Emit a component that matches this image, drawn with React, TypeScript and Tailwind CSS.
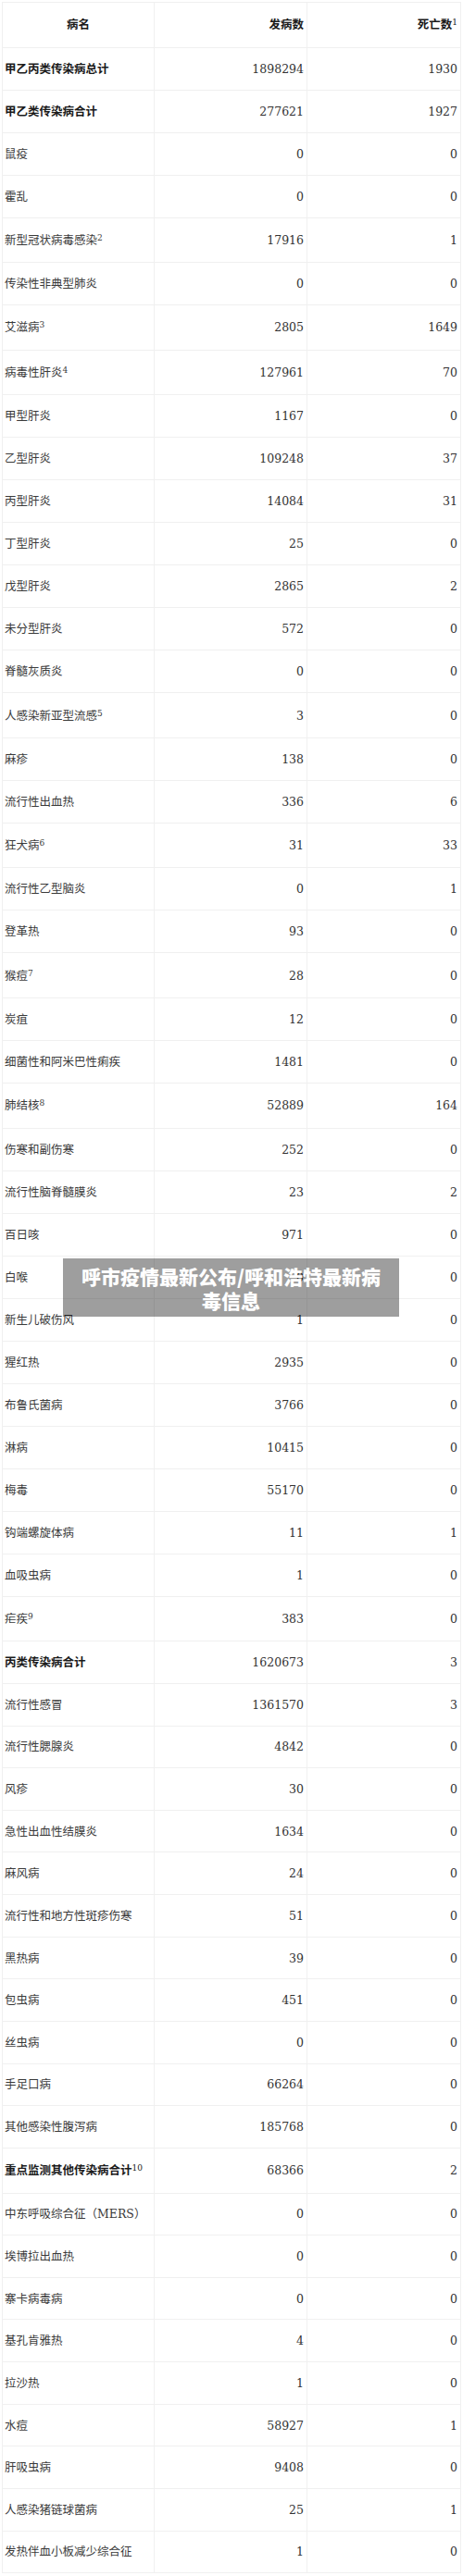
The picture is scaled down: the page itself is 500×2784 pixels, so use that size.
type Row = {
  name: string;
  sup?: string;
  cases: string;
  deaths: string;
  bold?: boolean;
};

const rows: Row[] = [
  { name: "甲乙丙类传染病总计", cases: "1898294", deaths: "1930", bold: true },
  { name: "甲乙类传染病合计", cases: "277621", deaths: "1927", bold: true },
  { name: "鼠疫", cases: "0", deaths: "0" },
  { name: "霍乱", cases: "0", deaths: "0" },
  { name: "新型冠状病毒感染", sup: "2", cases: "17916", deaths: "1" },
  { name: "传染性非典型肺炎", cases: "0", deaths: "0" },
  { name: "艾滋病", sup: "3", cases: "2805", deaths: "1649" },
  { name: "病毒性肝炎", sup: "4", cases: "127961", deaths: "70" },
  { name: "甲型肝炎", cases: "1167", deaths: "0" },
  { name: "乙型肝炎", cases: "109248", deaths: "37" },
  { name: "丙型肝炎", cases: "14084", deaths: "31" },
  { name: "丁型肝炎", cases: "25", deaths: "0" },
  { name: "戊型肝炎", cases: "2865", deaths: "2" },
  { name: "未分型肝炎", cases: "572", deaths: "0" },
  { name: "脊髓灰质炎", cases: "0", deaths: "0" },
  { name: "人感染新亚型流感", sup: "5", cases: "3", deaths: "0" },
  { name: "麻疹", cases: "138", deaths: "0" },
  { name: "流行性出血热", cases: "336", deaths: "6" },
  { name: "狂犬病", sup: "6", cases: "31", deaths: "33" },
  { name: "流行性乙型脑炎", cases: "0", deaths: "1" },
  { name: "登革热", cases: "93", deaths: "0" },
  { name: "猴痘", sup: "7", cases: "28", deaths: "0" },
  { name: "炭疽", cases: "12", deaths: "0" },
  { name: "细菌性和阿米巴性痢疾", cases: "1481", deaths: "0" },
  { name: "肺结核", sup: "8", cases: "52889", deaths: "164" },
  { name: "伤寒和副伤寒", cases: "252", deaths: "0" },
  { name: "流行性脑脊髓膜炎", cases: "23", deaths: "2" },
  { name: "百日咳", cases: "971", deaths: "0" },
  { name: "白喉", cases: "0", deaths: "0" },
  { name: "新生儿破伤风", cases: "1", deaths: "0" },
  { name: "猩红热", cases: "2935", deaths: "0" },
  { name: "布鲁氏菌病", cases: "3766", deaths: "0" },
  { name: "淋病", cases: "10415", deaths: "0" },
  { name: "梅毒", cases: "55170", deaths: "0" },
  { name: "钩端螺旋体病", cases: "11", deaths: "1" },
  { name: "血吸虫病", cases: "1", deaths: "0" },
  { name: "疟疾", sup: "9", cases: "383", deaths: "0" },
  { name: "丙类传染病合计", cases: "1620673", deaths: "3", bold: true },
  { name: "流行性感冒", cases: "1361570", deaths: "3" },
  { name: "流行性腮腺炎", cases: "4842", deaths: "0" },
  { name: "风疹", cases: "30", deaths: "0" },
  { name: "急性出血性结膜炎", cases: "1634", deaths: "0" },
  { name: "麻风病", cases: "24", deaths: "0" },
  { name: "流行性和地方性斑疹伤寒", cases: "51", deaths: "0" },
  { name: "黑热病", cases: "39", deaths: "0" },
  { name: "包虫病", cases: "451", deaths: "0" },
  { name: "丝虫病", cases: "0", deaths: "0" },
  { name: "手足口病", cases: "66264", deaths: "0" },
  { name: "其他感染性腹泻病", cases: "185768", deaths: "0" },
  { name: "重点监测其他传染病合计", sup: "10", cases: "68366", deaths: "2", bold: true },
  { name: "中东呼吸综合征（MERS）", cases: "0", deaths: "0" },
  { name: "埃博拉出血热", cases: "0", deaths: "0" },
  { name: "寨卡病毒病", cases: "0", deaths: "0" },
  { name: "基孔肯雅热", cases: "4", deaths: "0" },
  { name: "拉沙热", cases: "1", deaths: "0" },
  { name: "水痘", cases: "58927", deaths: "1" },
  { name: "肝吸虫病", cases: "9408", deaths: "0" },
  { name: "人感染猪链球菌病", cases: "25", deaths: "1" },
  { name: "发热伴血小板减少综合征", cases: "1", deaths: "0" },
];

const cellFont = "[font-family:'DejaVu_Serif','Noto_Sans_CJK_SC',serif]";

function Sup({ children }: { children: string }) {
  return <sup className="relative -top-[4px] align-baseline text-[9px] font-normal leading-none">{children}</sup>;
}

function TableRow({ row, index }: { row: Row; index: number }) {
  // rows in the upper part of the table come out a touch taller than the lower ones
  const height = row.sup ? "h-[48.6px]" : index < 37 ? "h-[46px]" : "h-[45.65px]";
  const weight = row.bold ? "font-bold text-[#1a1a1a]" : "text-[#3a3a3a]";

  return (
    <div className={`grid grid-cols-[164px_165px_166px] border-b border-[#f0f0f0] ${height} ${weight}`}>
      <div className="flex items-center border-r border-[#f0f0f0] pl-[2px] whitespace-nowrap">
        <span>
          {row.name}
          {row.sup ? <Sup>{row.sup}</Sup> : null}
        </span>
      </div>
      <div className="flex items-center justify-end border-r border-[#f0f0f0] pr-[3px] font-normal text-[#333]">
        {row.cases}
      </div>
      <div className="flex items-center justify-end border-r border-[#f0f0f0] pr-[3px] font-normal text-[#333]">
        {row.deaths}
      </div>
    </div>
  );
}

export default function App() {
  return (
    <div className={`relative h-[2784px] w-[500px] bg-white pt-[2px] pl-[2px] text-[12.5px] leading-[17px] ${cellFont}`}>
      <div className="w-[496px] border-t border-l border-[#f0f0f0]">
        <div className="grid h-[48.5px] grid-cols-[164px_165px_166px] border-b border-[#f0f0f0] font-bold text-[#1a1a1a]">
          <div className="flex items-center justify-center border-r border-[#f0f0f0]">病名</div>
          <div className="flex items-center justify-end border-r border-[#f0f0f0] pr-[3px]">发病数</div>
          <div className="flex items-center justify-end border-r border-[#f0f0f0] pr-[3px]">
            <span>
              死亡数
              <Sup>1</Sup>
            </span>
          </div>
        </div>
        {rows.map((row, index) => (
          <TableRow key={row.name} row={row} index={index} />
        ))}
      </div>

      <div className="absolute top-[1360px] left-[68px] flex h-[63px] w-[363px] items-center justify-center bg-[rgba(0,0,0,0.38)] px-[10px] text-center text-[21px] leading-[26px] font-black text-white [font-family:'Noto_Sans_CJK_SC',sans-serif]">
        呼市疫情最新公布/呼和浩特最新病毒信息
      </div>
    </div>
  );
}
